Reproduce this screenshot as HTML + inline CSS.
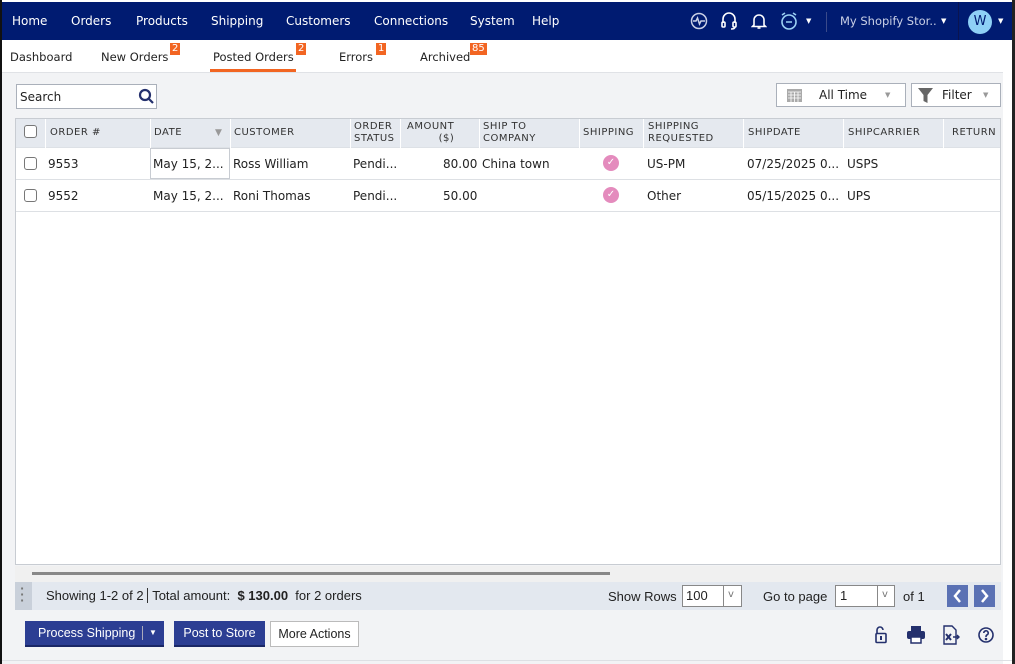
<!DOCTYPE html>
<html><head><meta charset="utf-8"><style>
*{margin:0;padding:0;box-sizing:border-box}
body{width:1015px;height:664px;overflow:hidden;font-family:"DejaVu Sans","Liberation Sans",sans-serif;font-size:12px;color:#222;background:#fff;position:relative}
.a{position:absolute;white-space:nowrap}
#nav{left:0;top:0;width:1015px;height:40px;background:#001b71;border-top:2px solid #fff}
#nav .t{color:#fff;font-size:12px;top:12px}
.tab{top:50px;font-size:11.5px;color:#222}
.bdg{position:absolute;background:#f26522;color:#fff;font-size:10px;line-height:12px;padding:0 2px;top:-7px}
#content{left:2px;top:72px;width:1001px;height:592px;background:#f2f3f5;border-top:1px solid #e0e2e6}
#tbl{left:15px;top:118px;width:986px;height:447px;background:#fff;border:1px solid #c8ccd2}
.hd{background:#e5e9ef;height:29px;top:0;left:0;width:984px;border-bottom:1px solid #dde1e6}
.h{font-size:10px;color:#333;letter-spacing:.5px;line-height:12px}
.r{font-size:12px;color:#222}
.cb{width:13px;height:13px;border:1px solid #777;border-radius:3px;background:#fff}
.chk{width:16px;height:16px;border-radius:50%;background:#e48bbd;color:#fff;font-size:10px;text-align:center;line-height:16px}
.btn{top:621px;height:26px;font-size:12.5px;line-height:24px;text-align:center;font-family:"Liberation Sans",sans-serif}
.ft{font-family:"Liberation Sans",sans-serif;font-size:13px}
.dd{font-size:7px}
</style></head><body>
<div class="a" style="left:0;top:0;width:2px;height:664px;background:#111;z-index:9"></div>
<div class="a" style="left:1012px;top:0;width:3px;height:664px;background:#222;z-index:9"></div>
<div class="a" id="nav">
<span class="a t" style="left:12px">Home</span>
<span class="a t" style="left:71px">Orders</span>
<span class="a t" style="left:136px">Products</span>
<span class="a t" style="left:211px">Shipping</span>
<span class="a t" style="left:286px">Customers</span>
<span class="a t" style="left:374px">Connections</span>
<span class="a t" style="left:470px">System</span>
<span class="a t" style="left:532px">Help</span>
<svg class="a" style="left:690px;top:10px" width="18" height="18" viewBox="0 0 18 18" fill="none" stroke="#c9d0e6" stroke-width="1.5"><circle cx="9" cy="9" r="7.5"/><path d="M3 9h3l1.5-3 2 6 1.5-3h4"/></svg>
<svg class="a" style="left:720px;top:9px" width="18" height="20" viewBox="0 0 18 20" fill="none" stroke="#fff" stroke-width="1.6"><path d="M3 12V8a6 6 0 0 1 12 0v4"/><rect x="2" y="11" width="3" height="5" rx="1"/><rect x="13" y="11" width="3" height="5" rx="1"/><path d="M15 16q0 2-4 2"/></svg>
<svg class="a" style="left:751px;top:10px" width="16" height="18" viewBox="0 0 16 18" fill="none" stroke="#fff" stroke-width="1.6"><path d="M3 13V8a5 5 0 0 1 10 0v5l1.5 1.5h-13z"/><path d="M6.5 16h3"/></svg>
<svg class="a" style="left:779px;top:9px" width="20" height="20" viewBox="0 0 20 20" fill="none" stroke="#9cd2f5" stroke-width="1.6"><circle cx="10" cy="11" r="7"/><path d="M7 11h6M3 4l3-2M17 4l-3-2"/></svg>
<span class="a dd" style="left:806px;top:15px;color:#fff">▼</span>
<div class="a" style="left:826px;top:10px;width:1px;height:20px;background:#3a4a8a"></div>
<span class="a t" style="left:840px;color:#c9d0e6;font-size:11.5px">My Shopify Stor..</span>
<span class="a dd" style="left:941px;top:15px;color:#fff">▼</span>
<div class="a" style="left:958px;top:0;width:1px;height:38px;background:#0a1450"></div>
<div class="a" style="left:968px;top:8px;width:24px;height:24px;border-radius:50%;background:#8ed0f6;color:#001b71;text-align:center;line-height:24px;font-size:13px">W</div>
<span class="a dd" style="left:998px;top:15px;color:#fff">▼</span>
</div>
<span class="a tab" style="left:10px">Dashboard</span>
<span class="a tab" style="left:101px">New Orders<span class="bdg" style="left:69px">2</span></span>
<span class="a tab" style="left:213px">Posted Orders<span class="bdg" style="left:83px">2</span></span>
<div class="a" style="left:210px;top:69px;width:86px;height:3px;background:#f26522"></div>
<span class="a tab" style="left:339px">Errors<span class="bdg" style="left:37px">1</span></span>
<span class="a tab" style="left:420px">Archived<span class="bdg" style="left:50px">85</span></span>
<div class="a" id="content"></div>
<div class="a" style="left:16px;top:84px;width:141px;height:25px;background:#fff;border:1px solid #aab0ba"></div>
<span class="a" style="left:20px;top:90px;font-size:12px">Search</span>
<svg class="a" style="left:138px;top:88px" width="17" height="17" viewBox="0 0 17 17" fill="none" stroke="#24306d" stroke-width="2.2"><circle cx="7" cy="7" r="5"/><path d="M10.5 10.5l4.5 4.5"/></svg>
<div class="a" style="left:776px;top:83px;width:130px;height:24px;background:#fff;border:1px solid #aab0ba"></div>
<svg class="a" style="left:787px;top:88px" width="15" height="14" viewBox="0 0 15 14"><rect x="0" y="1" width="15" height="13" fill="#aaa"/><path d="M1 4h13M1 7h13M1 10h13M4 4v10M7.5 4v10M11 4v10" stroke="#fff" stroke-width=".8"/></svg>
<span class="a" style="left:819px;top:88px;font-size:12px">All Time</span>
<span class="a" style="left:885px;top:91px;font-size:7px;color:#999">▼</span>
<div class="a" style="left:911px;top:83px;width:90px;height:24px;background:#fff;border:1px solid #aab0ba"></div>
<svg class="a" style="left:918px;top:88px" width="15" height="15" viewBox="0 0 15 15"><path d="M0 0h15l-5.5 7v8l-4-2V7z" fill="#666"/></svg>
<span class="a" style="left:942px;top:88px;font-size:12px">Filter</span>
<span class="a" style="left:983px;top:91px;font-size:7px;color:#999">▼</span>
<div class="a" id="tbl">
<div class="a hd"></div>
<div class="a" style="left:29px;top:0;width:1px;height:29px;background:#fff"></div>
<div class="a" style="left:134px;top:0;width:1px;height:29px;background:#fff"></div>
<div class="a" style="left:214px;top:0;width:1px;height:29px;background:#fff"></div>
<div class="a" style="left:334px;top:0;width:1px;height:29px;background:#fff"></div>
<div class="a" style="left:384px;top:0;width:1px;height:29px;background:#fff"></div>
<div class="a" style="left:463px;top:0;width:1px;height:29px;background:#fff"></div>
<div class="a" style="left:563px;top:0;width:1px;height:29px;background:#fff"></div>
<div class="a" style="left:627px;top:0;width:1px;height:29px;background:#fff"></div>
<div class="a" style="left:727px;top:0;width:1px;height:29px;background:#fff"></div>
<div class="a" style="left:827px;top:0;width:1px;height:29px;background:#fff"></div>
<div class="a" style="left:927px;top:0;width:1px;height:29px;background:#fff"></div>
<div class="a cb" style="left:8px;top:6px"></div>
<span class="a h" style="left:34px;top:8px">ORDER #</span>
<span class="a h" style="left:138px;top:8px">DATE</span>
<span class="a" style="left:199px;top:9px;font-size:9px;color:#999">▼</span>
<span class="a h" style="left:218px;top:8px">CUSTOMER</span>
<span class="a h" style="left:338px;top:2px">ORDER<br>STATUS</span>
<span class="a h" style="left:391px;top:2px;text-align:right">AMOUNT<br>&nbsp;&nbsp;&nbsp;&nbsp;&nbsp;&nbsp;($)</span>
<span class="a h" style="left:467px;top:2px">SHIP TO<br>COMPANY</span>
<span class="a h" style="left:567px;top:8px">SHIPPING</span>
<span class="a h" style="left:632px;top:2px">SHIPPING<br>REQUESTED</span>
<span class="a h" style="left:732px;top:8px">SHIPDATE</span>
<span class="a h" style="left:832px;top:8px">SHIPCARRIER</span>
<span class="a h" style="left:936px;top:8px">RETURN</span>
<div class="a" style="left:0;top:60px;width:984px;height:1px;background:#dde0e4"></div>
<div class="a" style="left:0;top:92px;width:984px;height:1px;background:#dde0e4"></div>
<div class="a" style="left:134px;top:29px;width:80px;height:31px;border:1px solid #c8ccd2"></div>
<div class="a cb" style="left:8px;top:38px"></div>
<span class="a r" style="left:32px;top:38px">9553</span>
<span class="a r" style="left:137px;top:38px">May 15, 2...</span>
<span class="a r" style="left:217px;top:38px">Ross William</span>
<span class="a r" style="left:337px;top:38px">Pendi...</span>
<span class="a r" style="left:427px;top:38px">80.00</span>
<span class="a r" style="left:466px;top:38px">China town</span>
<div class="a chk" style="left:587px;top:36px">✓</div>
<span class="a r" style="left:631px;top:38px">US-PM</span>
<span class="a r" style="left:731px;top:38px">07/25/2025 0...</span>
<span class="a r" style="left:831px;top:38px">USPS</span>
<div class="a cb" style="left:8px;top:70px"></div>
<span class="a r" style="left:32px;top:70px">9552</span>
<span class="a r" style="left:137px;top:70px">May 15, 2...</span>
<span class="a r" style="left:217px;top:70px">Roni Thomas</span>
<span class="a r" style="left:337px;top:70px">Pendi...</span>
<span class="a r" style="left:427px;top:70px">50.00</span>
<div class="a chk" style="left:587px;top:68px">✓</div>
<span class="a r" style="left:631px;top:70px">Other</span>
<span class="a r" style="left:731px;top:70px">05/15/2025 0...</span>
<span class="a r" style="left:831px;top:70px">UPS</span>
</div>
<div class="a" style="left:15px;top:566px;width:986px;height:16px;background:#f0f0f0"></div>
<div class="a" style="left:32px;top:572px;width:578px;height:3px;background:#888"></div>
<div class="a" style="left:15px;top:582px;width:986px;height:28px;background:#e3e8ef"></div>
<div class="a" style="left:15px;top:582px;width:17px;height:28px;background:#c9d0da"></div>
<span class="a" style="left:20px;top:586px;color:#777;font-size:11px;line-height:6px;font-weight:bold">·<br>·<br>·</span>
<span class="a ft" style="left:46px;top:588px">Showing 1-2 of 2 <span style="border-left:1px solid #333;padding-left:4px">Total amount: &nbsp;<b>$ 130.00</b>&nbsp; for 2 orders</span></span>
<span class="a ft" style="left:608px;top:589px">Show Rows</span>
<div class="a" style="left:682px;top:585px;width:60px;height:22px;background:#fff;border:1px solid #888"></div>
<div class="a" style="left:723px;top:585px;width:1px;height:22px;background:#888"></div>
<span class="a ft" style="left:686px;top:588px">100</span>
<span class="a" style="left:728px;top:589px;color:#777;font-size:10px">v</span>
<span class="a ft" style="left:763px;top:589px">Go to page</span>
<div class="a" style="left:835px;top:585px;width:60px;height:22px;background:#fff;border:1px solid #888"></div>
<div class="a" style="left:877px;top:585px;width:1px;height:22px;background:#888"></div>
<span class="a ft" style="left:840px;top:588px">1</span>
<span class="a" style="left:882px;top:589px;color:#777;font-size:10px">v</span>
<span class="a ft" style="left:903px;top:589px">of 1</span>
<svg class="a" style="left:947px;top:585px" width="21" height="22" viewBox="0 0 21 22"><rect width="21" height="22" fill="#5a71b4"/><path d="M13 5l-5 6 5 6" fill="none" stroke="#fff" stroke-width="2.5"/></svg>
<svg class="a" style="left:974px;top:585px" width="21" height="22" viewBox="0 0 21 22"><rect width="21" height="22" fill="#5a71b4"/><path d="M8 5l5 6-5 6" fill="none" stroke="#fff" stroke-width="2.5"/></svg>
<div class="a btn" style="left:25px;width:139px;background:#2c3e93;color:#fff;border-bottom:2px solid #1a2766"><span style="position:absolute;left:13px">Process Shipping</span><span style="position:absolute;left:117px;top:5px;height:14px;border-left:1px solid #aab">&nbsp;</span><span style="position:absolute;left:124px;font-size:8px">▼</span></div>
<div class="a btn" style="left:174px;width:91px;background:#2c3e93;color:#fff;border-bottom:2px solid #1a2766">Post to Store</div>
<div class="a btn" style="left:270px;width:89px;background:#fff;border:1px solid #bbb">More Actions</div>
<svg class="a" style="left:874px;top:626px" width="14" height="18" viewBox="0 0 14 18" fill="none" stroke="#24306d" stroke-width="1.6"><path d="M3 7V4a3 3 0 0 1 6 0"/><rect x="2" y="7.5" width="10" height="9" rx="1"/><path d="M7 10v4" stroke-width="2"/></svg>
<svg class="a" style="left:906px;top:626px" width="20" height="18" viewBox="0 0 20 18" fill="#24306d"><rect x="5" y="0" width="10" height="5"/><rect x="1" y="5" width="18" height="8" rx="2"/><rect x="5" y="11" width="10" height="6" fill="#fff" stroke="#24306d" stroke-width="1.5"/></svg>
<svg class="a" style="left:942px;top:625px" width="18" height="20" viewBox="0 0 18 20" fill="none" stroke="#24306d" stroke-width="1.4"><path d="M2 1h8l4 4v14H2z"/><path d="M4 9l5 6M9 9l-5 6" stroke-width="2"/><path d="M11 12h6M15 10l2 2-2 2"/></svg>
<svg class="a" style="left:978px;top:627px" width="16" height="16" viewBox="0 0 16 16" fill="none" stroke="#24306d" stroke-width="1.6"><circle cx="8" cy="8" r="7"/><path d="M5.8 6a2.2 2.2 0 1 1 3 2c-.8.4-.8 1-.8 2"/><circle cx="8" cy="12" r=".5" fill="#24306d"/></svg>
<div class="a" style="left:2px;top:660px;width:1010px;height:1px;background:#dde0e4"></div>
</body></html>
